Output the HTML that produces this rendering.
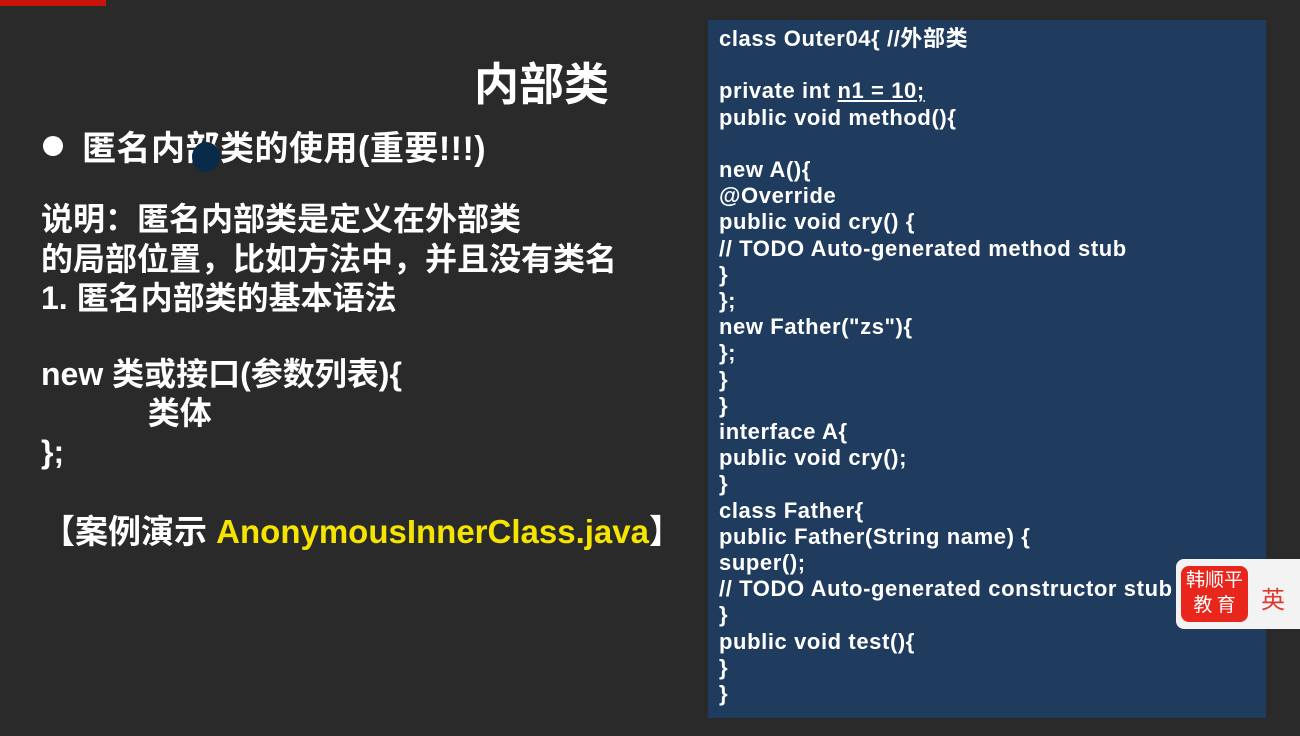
<!DOCTYPE html>
<html><head><meta charset="utf-8"><style>
body{margin:0;width:1300px;height:736px;overflow:hidden;background:#2a2a2a;font-family:"Liberation Sans","Noto Sans CJK SC",sans-serif;color:#fff;position:relative}
.a{position:absolute;font-weight:bold;white-space:nowrap}
#code{position:absolute;left:708px;top:20px;width:558px;height:698px;background:#1f3b5e;overflow:hidden}
#code pre{margin:0;position:absolute;left:11px;font-family:"Liberation Sans","Noto Sans CJK SC",sans-serif;font-weight:bold;font-size:22px;letter-spacing:0.6px;line-height:26.2px;color:#fff}
</style></head><body>
<div style="position:absolute;left:0;top:0;width:106px;height:6px;background:#c8140a"></div>
<div class="a" style="left:474px;top:48px;font-size:45px">内部类</div>
<div style="position:absolute;left:43px;top:136px;width:20px;height:20px;border-radius:50%;background:#fff"></div>
<div class="a" style="left:82px;top:121px;font-size:34px;letter-spacing:0.5px">匿名内部类的使用(重要!!!)</div>
<div style="position:absolute;left:192px;top:142px;width:28px;height:30px;border-radius:50%;background:#0a2a4a"></div>
<div class="a" style="left:41px;top:200px;font-size:32px;line-height:39.5px">说明：匿名内部类是定义在外部类<br>的局部位置，比如方法中，并且没有类名<br>1. 匿名内部类的基本语法</div>
<div class="a" style="left:41px;top:355px;font-size:32px;line-height:39px">new 类或接口(参数列表){<br>&nbsp;&nbsp;&nbsp;&nbsp;&nbsp;&nbsp;&nbsp;&nbsp;&nbsp;&nbsp;&nbsp;&nbsp;类体<br>};</div>
<div class="a" style="left:42px;top:505px;font-size:33px">【案例演示 <span style="color:#f5e400">AnonymousInnerClass.java</span>】</div>
<div id="code"><pre style="top:6px">class Outer04{ //外部类

private int <u>n1 = 10;</u>
public void method(){

new A(){
@Override
public void cry() {
// TODO Auto-generated method stub
}
};
new Father("zs"){
};
}
}
interface A{
public void cry();
}
class Father{
public Father(String name) {
super();
// TODO Auto-generated constructor stub
}
public void test(){
}
}</pre></div>
<div style="position:absolute;left:1176px;top:559px;width:124px;height:70px;background:#f3f3f3;border-radius:8px 0 0 8px"></div>
<div style="position:absolute;left:1181px;top:566px;width:67px;height:56px;background:#e8261c;border-radius:8px;color:#fff;font-size:19px;line-height:25px;text-align:center;font-family:'Noto Sans CJK SC',sans-serif">韩顺平<br>教&nbsp;育</div>
<div style="position:absolute;left:1261px;top:580px;color:#e03a2e;font-size:24px;font-family:'Noto Sans CJK SC',sans-serif">英</div>
</body></html>
